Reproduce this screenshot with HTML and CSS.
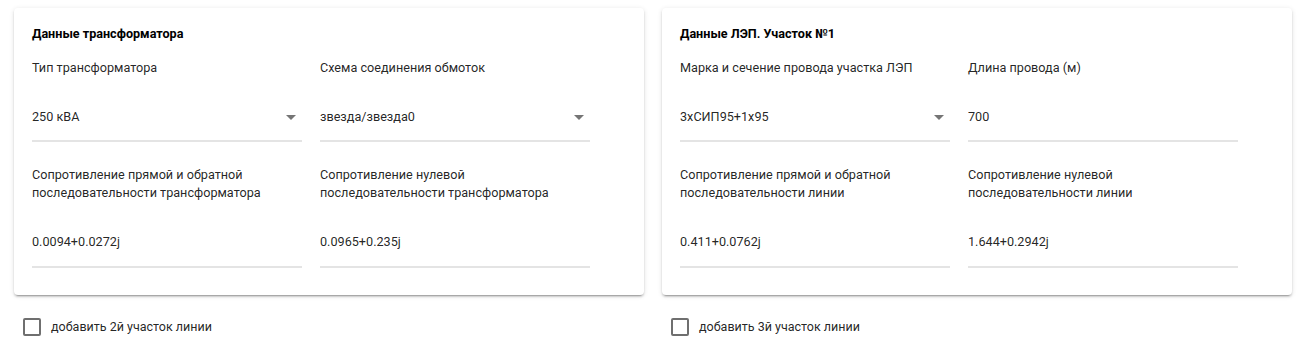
FILE: index.html
```html
<!DOCTYPE html>
<html lang="ru">
<head>
<meta charset="utf-8">
<link rel="stylesheet" href="styles.css">
</head>
<body>
<div class="page">
  <div class="column">
    <section class="card">
      <h3 class="card-title">Данные трансформатора</h3>
      <div class="fields">
        <div class="field">
          <div class="label">Тип трансформатора</div>
          <div class="input select"><span>250 кВА</span><span class="arrow"></span></div>
        </div>
        <div class="field">
          <div class="label">Схема соединения обмоток</div>
          <div class="input select"><span>звезда/звезда0</span><span class="arrow"></span></div>
        </div>
        <div class="field">
          <div class="label">Сопротивление прямой и обратной последовательности трансформатора</div>
          <div class="input"><span>0.0094+0.0272j</span></div>
        </div>
        <div class="field">
          <div class="label">Сопротивление нулевой последовательности трансформатора</div>
          <div class="input"><span>0.0965+0.235j</span></div>
        </div>
      </div>
    </section>
    <label class="check"><span class="box"></span><span>добавить 2й участок линии</span></label>
  </div>
  <div class="column">
    <section class="card">
      <h3 class="card-title">Данные ЛЭП. Участок №1</h3>
      <div class="fields">
        <div class="field">
          <div class="label">Марка и сечение провода участка ЛЭП</div>
          <div class="input select"><span>3хСИП95+1х95</span><span class="arrow"></span></div>
        </div>
        <div class="field">
          <div class="label">Длина провода (м)</div>
          <div class="input"><span>700</span></div>
        </div>
        <div class="field">
          <div class="label">Сопротивление прямой и обратной последовательности линии</div>
          <div class="input"><span>0.411+0.0762j</span></div>
        </div>
        <div class="field">
          <div class="label">Сопротивление нулевой последовательности линии</div>
          <div class="input"><span>1.644+0.2942j</span></div>
        </div>
      </div>
    </section>
    <label class="check"><span class="box"></span><span>добавить 3й участок линии</span></label>
  </div>
</div>
</body>
</html>
```

FILE: styles.css
```css
html, body {
  margin: 0;
  background: #ffffff;
}
body {
  font-family: Roboto, "Noto Sans", Arial, sans-serif;
  color: rgba(0, 0, 0, 0.87);
}
.page {
  display: grid;
  grid-template-columns: 630px 630px;
  column-gap: 18px;
  padding: 8px 15px 0 14px;
}
.column {
  display: flex;
  flex-direction: column;
}
.card {
  background: #fff;
  border-radius: 4px;
  box-shadow: 0 3px 1px -2px rgba(0,0,0,.2), 0 2px 2px 0 rgba(0,0,0,.14), 0 1px 5px 0 rgba(0,0,0,.12);
  padding: 18px 18px 26px 18px;
  height: 287px;
  box-sizing: border-box;
}
.card-title {
  margin: 0 0 17px 0;
  font-size: 12.6px;
  font-weight: 700;
  line-height: 16px;
  color: #000;
}
.fields {
  display: grid;
  grid-template-columns: 270px 270px;
  column-gap: 18px;
  row-gap: 25px;
  align-items: end;
}
.label {
  font-size: 12.65px;
  line-height: 18px;
}
.input {
  display: flex;
  align-items: center;
  justify-content: space-between;
  margin-top: 22px;
  padding: 10px 0 15px 0;
  height: 16px;
  font-size: 12.65px;
  line-height: 16px;
  border-bottom: 2px solid #e4e4e4;
}
.fields .field:nth-child(n+3) .label {
  margin-top: -1px;
}
.fields .field:nth-child(n+3) .input {
  padding-bottom: 16px;
}
.arrow {
  width: 0;
  height: 0;
  border-left: 5px solid transparent;
  border-right: 5px solid transparent;
  border-top: 5px solid #757575;
  margin-right: 6px;
}
.check {
  display: flex;
  align-items: center;
  gap: 10px;
  margin: 23px 0 0 9px;
  font-size: 12.5px;
  line-height: 18px;
}
.box {
  width: 14px;
  height: 14px;
  border: 2px solid #6f6f6f;
  border-radius: 2px;
}
```
